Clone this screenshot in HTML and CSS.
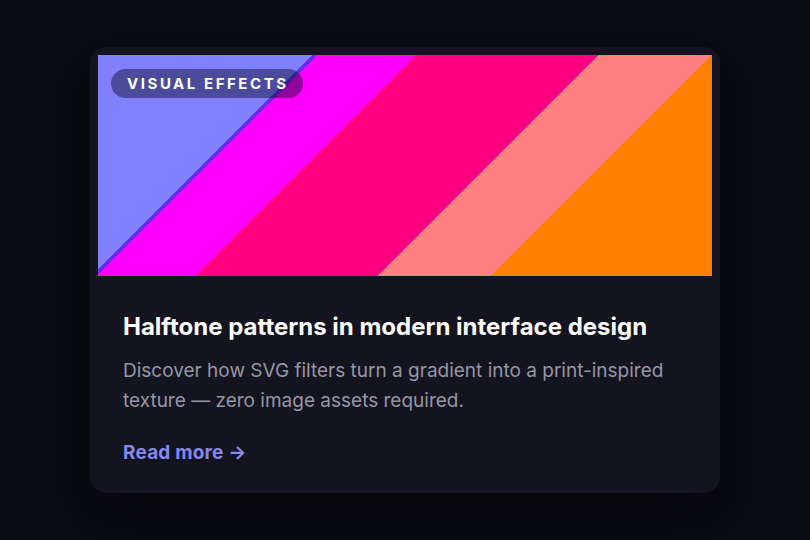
FILE: index.html
```html
<!DOCTYPE html>
<html lang="en">
<head>
<meta charset="utf-8">
<title>Halftone card</title>
<link rel="stylesheet" href="styles.css">
</head>
<body>
<article class="card">
  <div class="media">
    <span class="badge">Visual effects</span>
  </div>
  <div class="body">
    <h2 class="title">Halftone patterns in modern interface design</h2>
    <p class="desc">Discover how SVG filters turn a gradient into a print-inspired texture — zero image assets required.</p>
    <a class="link" href="#">Read more →</a>
  </div>
</article>
</body>
</html>
```
FILE: styles.css
```css
html, body {
  margin: 0;
  height: 100%;
}
body {
  background: #0b0c14;
  display: flex;
  align-items: center;
  justify-content: center;
  font-family: Inter, "Noto Sans", sans-serif;
}
.card {
  width: 630px;
  box-sizing: border-box;
  padding: 8px 8px 0;
  background: #141420;
  border-radius: 16px;
  box-shadow: 0 20px 50px rgba(0, 0, 0, 0.55);
}
.media {
  position: relative;
  height: 221px;
  background: linear-gradient(135deg,
    #8080ff 0%, #8080ff 25.7%,
    #6428f6 25.7%, #6428f6 26.3%,
    #ff00ff 26.3%, #ff00ff 38.2%,
    #ff0080 38.2%, #ff0080 60%,
    #ff8080 60%, #ff8080 73.5%,
    #ff8000 73.5%, #ff8000 100%);
}
.badge {
  position: absolute;
  left: 13px;
  top: 14px;
  height: 29px;
  line-height: 29px;
  padding: 0 14px 0 16px;
  border-radius: 15px;
  background: rgba(12, 12, 36, 0.45);
  color: #fff;
  font-size: 15px;
  font-weight: 700;
  letter-spacing: 0.17em;
  text-transform: uppercase;
}
.body {
  padding: 36px 25px 28px;
}
.title {
  margin: 0 0 14px;
  color: #fff;
  font-size: 24px;
  line-height: 30px;
  font-weight: 700;
}
.desc {
  margin: 0 0 25px;
  color: #9696a4;
  font-size: 19px;
  line-height: 30px;
}
.link {
  display: block;
  color: #8788ec;
  font-size: 19px;
  line-height: 24px;
  font-weight: 700;
  text-decoration: none;
  letter-spacing: 0.01em;
}
```
